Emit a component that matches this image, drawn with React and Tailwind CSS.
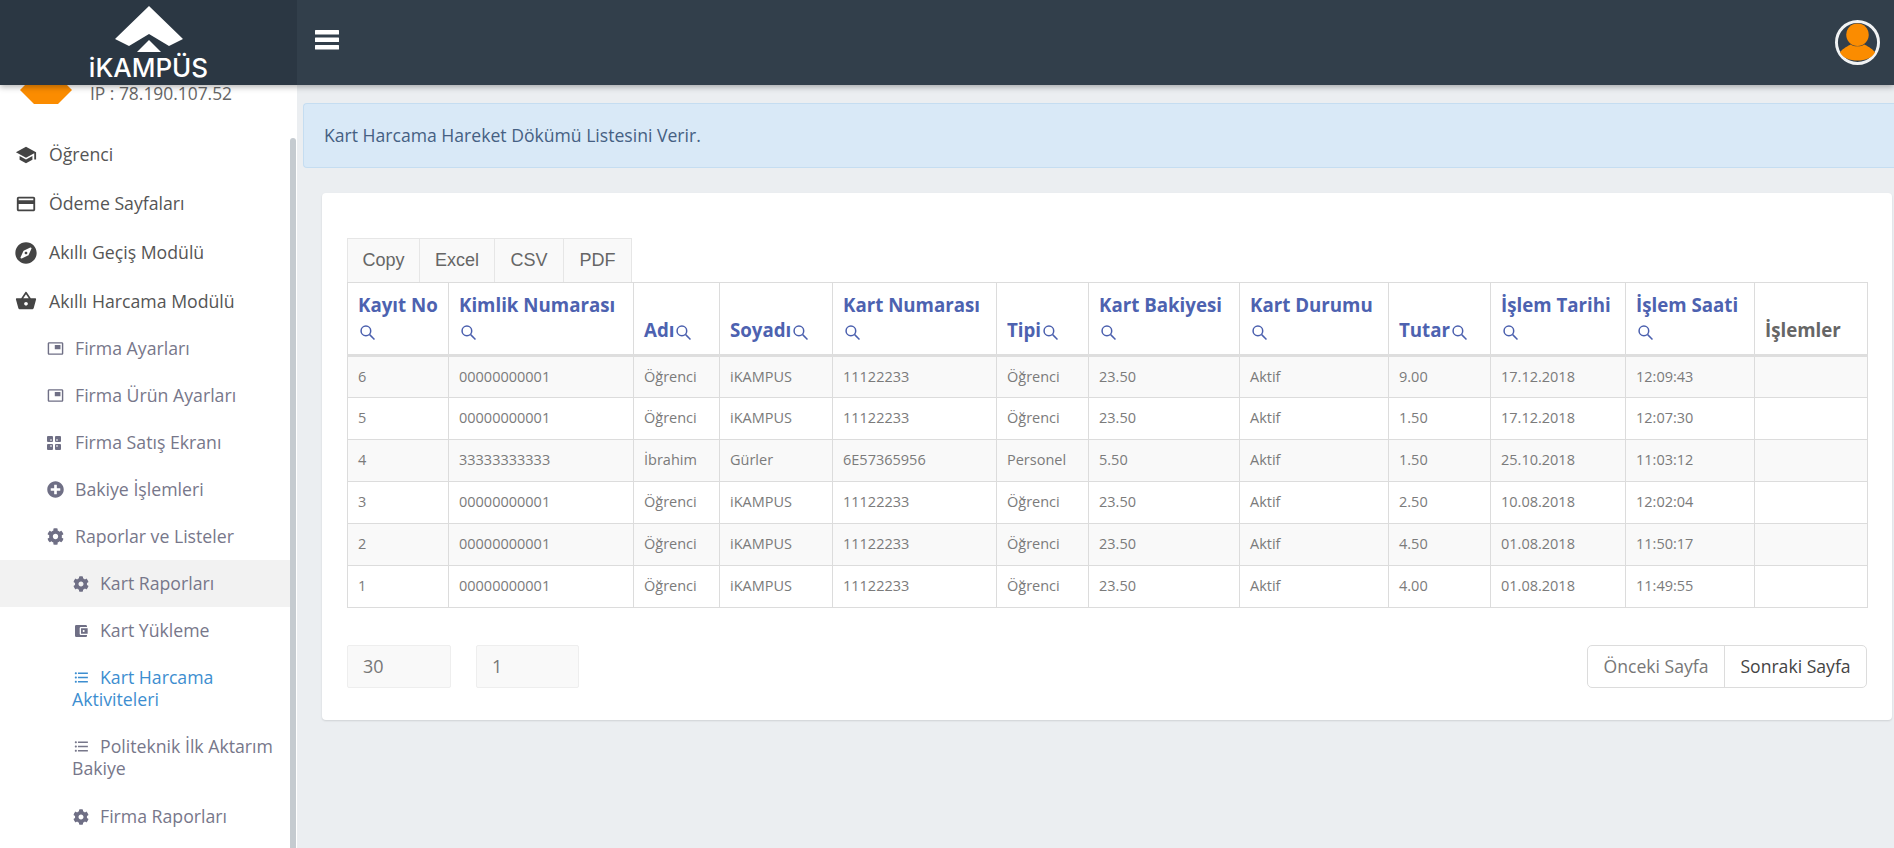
import React from "react";
import { FaCompass, FaPlusCircle, FaCog } from "react-icons/fa";
import {
  MdSchool,
  MdCreditCard,
  MdShoppingBasket,
  MdPictureInPicture,
  MdAccountBalanceWallet,
  MdFormatListBulleted,
} from "react-icons/md";

const rows = [
  ["6", "00000000001", "Öğrenci", "iKAMPUS", "11122233", "Öğrenci", "23.50", "Aktif", "9.00", "17.12.2018", "12:09:43"],
  ["5", "00000000001", "Öğrenci", "iKAMPUS", "11122233", "Öğrenci", "23.50", "Aktif", "1.50", "17.12.2018", "12:07:30"],
  ["4", "33333333333", "İbrahim", "Gürler", "6E57365956", "Personel", "5.50", "Aktif", "1.50", "25.10.2018", "11:03:12"],
  ["3", "00000000001", "Öğrenci", "iKAMPUS", "11122233", "Öğrenci", "23.50", "Aktif", "2.50", "10.08.2018", "12:02:04"],
  ["2", "00000000001", "Öğrenci", "iKAMPUS", "11122233", "Öğrenci", "23.50", "Aktif", "4.50", "01.08.2018", "11:50:17"],
  ["1", "00000000001", "Öğrenci", "iKAMPUS", "11122233", "Öğrenci", "23.50", "Aktif", "4.00", "01.08.2018", "11:49:55"],
];

const columns = [
  { label: "Kayıt No", width: "w-[101px]", wrap: true },
  { label: "Kimlik Numarası", width: "w-[185px]", wrap: true },
  { label: "Adı", width: "w-[86px]" },
  { label: "Soyadı", width: "w-[113px]" },
  { label: "Kart Numarası", width: "w-[164px]", wrap: true },
  { label: "Tipi", width: "w-[92px]" },
  { label: "Kart Bakiyesi", width: "w-[151px]", wrap: true },
  { label: "Kart Durumu", width: "w-[149px]", wrap: true },
  { label: "Tutar", width: "w-[102px]" },
  { label: "İşlem Tarihi", width: "w-[135px]", wrap: true },
  { label: "İşlem Saati", width: "w-[129px]", wrap: true },
];

const SearchIcon = () => (
  <svg viewBox="1 1 14 14" className="inline-block w-[15px] h-[15px] ml-[2px] text-[#4a5fae]" fill="none" stroke="currentColor" strokeWidth="1.4">
    <circle cx="6.5" cy="6.5" r="4.5" />
    <path d="M10 10l4.500 4.500" />
  </svg>
);

const SalesIcon = () => (
  <svg viewBox="0 0 14 14" className="w-[14px] h-[14px] mt-[1px]" fill="currentColor">
    <rect width="6" height="6" rx="1" />
    <rect x="8" width="6" height="6" rx="1" />
    <rect y="8" width="6" height="6" rx="1" />
    <rect x="8" y="8" width="6" height="6" rx="1" />
    <path d="M3 3h2v2H3zM9 3h2v2H9zM3 9h2v2H3zM9 9h2v2H9z" fill="#fff" opacity="0.5" />
  </svg>
);

const Logo = () => (
  <div className="flex flex-col items-center w-[297px] h-[85px] bg-[#2b3743] shrink-0">
    <svg viewBox="0 0 68 46" className="w-[68px] h-[46px] mt-[6px] shrink-0">
      <path fill="#fff" d="M34 0L68 33 54 40 34 28 14 40 0 33z" />
      <path fill="#fff" d="M34 34L46 46H22z" />
    </svg>
    <div className="text-white text-[26px] leading-[20px] font-medium mt-[6px] font-['Inter',sans-serif]">iKAMPÜS</div>
  </div>
);

const TopLink = ({ icon, height = "h-[49px]", children }) => (
  <div className={`flex items-center ${height} pl-[15px] text-[17.7px] text-[#555] shrink-0`}>
    <span className="w-[34px] text-[22px] text-[#444] flex shrink-0">{icon}</span>
    {children}
  </div>
);

const SubLink = ({ icon, children }) => (
  <div className="flex items-center h-[47px] pl-[47px] text-[17.7px] text-[#77778a] shrink-0">
    <span className="w-[28px] text-[17px] text-[#6f6f85] flex shrink-0">{icon}</span>
    {children}
  </div>
);

const ThirdLink = ({ icon, children, active }) => (
  <div className={`flex items-center h-[47px] pl-[73px] text-[17.7px] text-[#77778a] shrink-0 ${active ? "bg-[#f2f2f2]" : ""}`}>
    <span className="w-[27px] text-[16px] text-[#6f6f85] flex shrink-0">{icon}</span>
    {children}
  </div>
);

const WrapLink = ({ first, second, color, bottom }) => (
  <div className={`pl-[72px] pr-2 pt-[12px] text-[17.7px] leading-[22px] shrink-0 ${color} ${bottom}`}>
    <span className="inline-block w-[28px] align-[-2px]">
      <MdFormatListBulleted className="text-[17px] ml-px" />
    </span>
    {first}
    <br />
    {second}
  </div>
);

const Sidebar = () => (
  <aside className="flex w-[297px] h-[763px] bg-white shrink-0 overflow-hidden pr-px">
    <div className="flex-1 flex flex-col min-w-0">
      <div className="flex h-[19px] shrink-0 pl-[20px]">
        <svg viewBox="0 0 52 19" className="w-[52px] h-[19px] shrink-0">
          <path fill="#fb8c00" d="M5 0H47L52 5 38 19H14L0 5z" />
        </svg>
        <div className="ml-[18px] text-[17.4px] leading-[17px] text-[#666]">IP : 78.190.107.52</div>
      </div>
      <div className="h-[26px] shrink-0"></div>
      <TopLink icon={<MdSchool />}>Öğrenci</TopLink>
      <TopLink icon={<MdCreditCard />}>Ödeme Sayfaları</TopLink>
      <TopLink icon={<FaCompass />}>Akıllı Geçiş Modülü</TopLink>
      <TopLink icon={<MdShoppingBasket />} height="h-[48px]">Akıllı Harcama Modülü</TopLink>
      <SubLink icon={<MdPictureInPicture />}>Firma Ayarları</SubLink>
      <SubLink icon={<MdPictureInPicture />}>Firma Ürün Ayarları</SubLink>
      <SubLink icon={<SalesIcon />}>Firma Satış Ekranı</SubLink>
      <SubLink icon={<FaPlusCircle />}>Bakiye İşlemleri</SubLink>
      <SubLink icon={<FaCog />}>Raporlar ve Listeler</SubLink>
      <ThirdLink icon={<FaCog />} active>Kart Raporları</ThirdLink>
      <ThirdLink icon={<MdAccountBalanceWallet />}>Kart Yükleme</ThirdLink>
      <WrapLink first="Kart Harcama" second="Aktiviteleri" color="text-[#3d8ed0]" bottom="pb-[13px]" />
      <WrapLink first="Politeknik İlk Aktarım" second="Bakiye" color="text-[#77778a]" bottom="pb-[14px]" />
      <ThirdLink icon={<FaCog />}>Firma Raporları</ThirdLink>
    </div>
    <div className="w-[6px] mt-[53px] bg-[#c5cbd0] rounded-t-[3px] shrink-0"></div>
  </aside>
);

const DataTable = () => (
  <table className="w-[1520px] table-fixed border-collapse text-[14.5px] text-[#7b7b7b]">
    <thead>
      <tr className="h-[73px]">
        {columns.map((col) => (
          <th
            key={col.label}
            className={`${col.width} border border-[#dcdcdc] border-b-[3px] border-b-[#dedede] px-[10px] pb-[12px] align-bottom text-left text-[18.7px] leading-[25px] font-bold text-[#4d62b0]`}
          >
            {col.label}
            {col.wrap ? <br /> : null}
            <SearchIcon />
          </th>
        ))}
        <th className="w-[113px] border border-[#dcdcdc] border-b-[3px] border-b-[#dedede] px-[10px] pb-[12px] align-bottom text-left text-[18.7px] leading-[25px] font-bold text-[#666]">
          İşlemler
        </th>
      </tr>
    </thead>
    <tbody>
      {rows.map((row, i) => (
        <tr key={row[0]} className={`h-[42px] ${i % 2 === 0 ? "bg-[#f9f9f9]" : "bg-white"}`}>
          {row.map((cell, j) => (
            <td key={j} className="border border-[#dcdcdc] px-[10px] pb-[1px]">
              {cell}
            </td>
          ))}
          <td className="border border-[#dcdcdc]"></td>
        </tr>
      ))}
    </tbody>
  </table>
);

export default function App() {
  return (
    <div className="w-[1894px] h-[848px] overflow-hidden bg-[#ebeef1] font-['Open_Sans',sans-serif]">
      <header className="relative z-10 flex h-[85px] bg-[#323f4b] shadow-[0_2px_6px_rgba(0,0,0,0.3)]">
        <Logo />
        <div className="flex flex-1 items-center justify-between pl-[18px] pr-[14px]">
          <svg viewBox="0 0 24 20" className="w-[24px] h-[20px] mt-[-5px]" fill="#fff">
            <rect width="24" height="4.500" rx="0.500" />
            <rect y="7.500" width="24" height="4.500" rx="0.500" />
            <rect y="15" width="24" height="4.500" rx="0.500" />
          </svg>
          <svg viewBox="0 0 46 46" className="w-[45px] h-[45px] mt-[-1px]">
            <circle cx="23" cy="23" r="21.500" fill="#323f4b" stroke="#f1f3f4" strokeWidth="3" />
            <circle cx="23" cy="15" r="11.500" fill="#fb8c00" />
            <path fill="#fb8c00" d="M5 33c3-4 9-7 11-8 3 2.500 11 2.500 14 0 2 1 8 4 11 8-3 6-10 8.500-18 8.500S8 39 5 33z" />
          </svg>
        </div>
      </header>
      <div className="flex h-[763px]">
        <Sidebar />
        <main className="flex-1 min-w-0 pl-[6px] pt-[18px]">
          <div className="h-[65px] flex items-center pl-[20px] bg-[#d9e9f7] border border-[#c5ddf1] border-r-0 rounded-l-[4px] text-[#456083] text-[17.6px]">
            Kart Harcama Hareket Dökümü Listesini Verir.
          </div>
          <section className="mt-[25px] ml-[19px] mr-[2px] h-[527px] bg-white rounded-[4px] shadow-[0_1px_2px_rgba(0,0,0,0.12)] pl-[25px] pt-[45px]">
            <div className="flex h-[44px] font-['Liberation_Sans',sans-serif] text-[18px] text-[#666]">
              {[
                ["Copy", "w-[73px]"],
                ["Excel", "w-[75px]"],
                ["CSV", "w-[69px]"],
                ["PDF", "w-[68px]"],
              ].map(([label, width]) => (
                <button key={label} className={`${width} bg-[#f9f9f9] border-r border-t border-[#e6e6e6] first:border-l`}>
                  {label}
                </button>
              ))}
            </div>
            <DataTable />
            <div className="flex justify-between mt-[37px] w-[1520px]">
              <div className="flex gap-[25px]">
                <div className="w-[104px] h-[43px] flex items-center pl-[15px] bg-[#f9f9f9] border border-[#eeeeee] rounded-[2px] text-[18px] text-[#777]">30</div>
                <div className="w-[103px] h-[43px] flex items-center pl-[15px] bg-[#f9f9f9] border border-[#eeeeee] rounded-[2px] text-[18px] text-[#777]">1</div>
              </div>
              <div className="flex h-[43px] border border-[#dcdcdc] rounded-[5px] text-[17.6px]">
                <button className="w-[137px] text-[#777] border-r border-[#dcdcdc]">Önceki Sayfa</button>
                <button className="w-[141px] text-[#444]">Sonraki Sayfa</button>
              </div>
            </div>
          </section>
        </main>
      </div>
    </div>
  );
}
